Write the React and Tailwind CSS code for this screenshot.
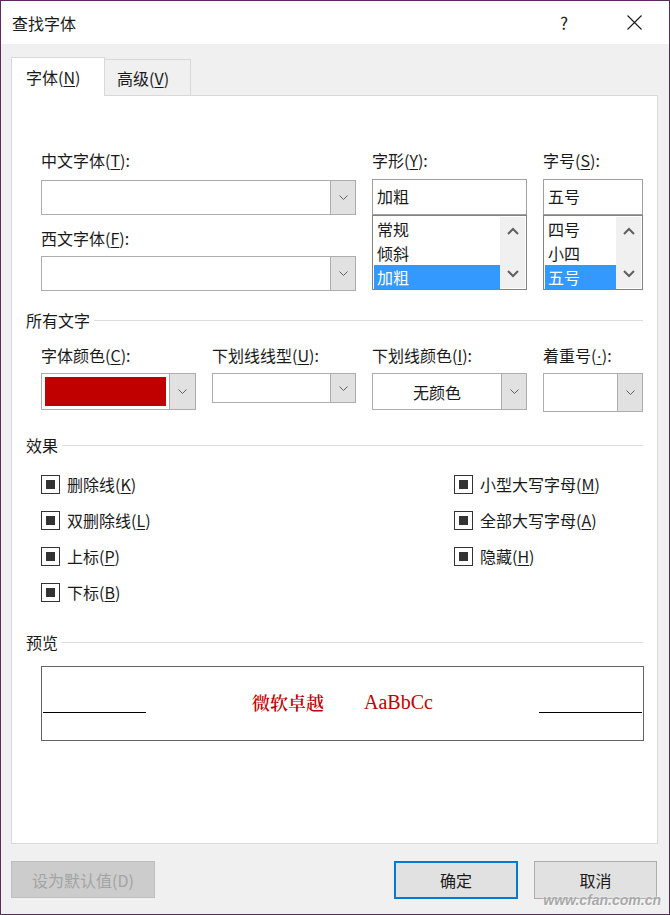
import React from 'react'

const font = "font-['Microsoft_YaHei','Noto_Sans_CJK_SC',sans-serif]"

function Key({ k }) {
  return <span className="underline underline-offset-2 decoration-1">{k}</span>
}

function Label({ text, k, tail = ':' }) {
  return (
    <div className="h-[22px] text-[16px] leading-[22px] text-[#1a1a1a] whitespace-nowrap">
      {text}(<Key k={k} />){tail}
    </div>
  )
}

function Chevron() {
  return (
    <svg width="9" height="5" viewBox="0 0 9 5" fill="none">
      <polyline points="0.5,0.5 4.5,4.5 8.5,0.5" stroke="#5f5f5f" strokeWidth="1" />
    </svg>
  )
}

function ScrollArrow({ up }) {
  return (
    <svg width="12" height="8" viewBox="0 0 12 8" fill="none">
      <polyline
        points={up ? '1,7 6,2 11,7' : '1,1 6,6 11,1'}
        stroke="#606060"
        strokeWidth="2"
      />
    </svg>
  )
}

function Combo({ w, h, children }) {
  return (
    <div className={`flex border border-[#adadad] bg-white ${w} ${h}`}>
      <div className="flex-1 min-w-0">{children}</div>
      <div className="w-[25px] bg-[#e1e1e1] border-l border-[#adadad] flex items-center justify-center">
        <Chevron />
      </div>
    </div>
  )
}

function ListBox({ items, selected, w }) {
  return (
    <div className={`${w} h-[75px] border border-[#828282] bg-white flex p-px`}>
      <div className="flex-1 flex flex-col">
        {items.map((it) => (
          <div
            key={it}
            className={`h-[24px] leading-[24px] pl-[3px] text-[16px] ${
              it === selected ? 'bg-[#3399ff] text-white' : 'text-[#1a1a1a]'
            }`}
          >
            {it}
          </div>
        ))}
      </div>
      <div className="w-[25px] bg-[#f0f0f0] flex flex-col items-center justify-between py-[10px]">
        <ScrollArrow up />
        <ScrollArrow />
      </div>
    </div>
  )
}

function SectionHeader({ title }) {
  return (
    <div className="flex items-center h-[22px] mr-[14px]">
      <span className="text-[16px] leading-[22px] text-[#1a1a1a]">{title}</span>
      <div className="flex-1 h-px bg-[#dcdcdc] ml-[4px]" />
    </div>
  )
}

function Check({ text, k }) {
  return (
    <div className="h-[36px] flex items-center">
      <div className="w-[19px] h-[19px] border border-[#333] flex items-center justify-center bg-white">
        <div className="w-[9px] h-[9px] bg-[#333]" />
      </div>
      <span className="ml-[7px] text-[16px] leading-[22px] text-[#1a1a1a] whitespace-nowrap">
        {text}(<Key k={k} />)
      </span>
    </div>
  )
}

export default function App() {
  return (
    <div className={`relative w-[670px] h-[915px] border border-[#5b2a5e] bg-[#f0f0f0] flex flex-col ${font}`}>
      {/* title bar */}
      <div className="h-[43px] bg-white flex items-center pl-[11px] pr-[27px]">
        <span className="text-[16px] text-[#1a1a1a]">查找字体</span>
        <span className="ml-auto text-[17px] text-[#1a1a1a] mr-[59px]">?</span>
        <svg width="15" height="15" viewBox="0 0 15 15" fill="none">
          <path d="M0.5 0.5 L14.5 14.5 M14.5 0.5 L0.5 14.5" stroke="#1a1a1a" strokeWidth="1.1" />
        </svg>
      </div>

      {/* tabs */}
      <div className="mt-[13px] ml-[10px] flex items-end">
        <div className="relative z-10 -mb-px w-[94px] h-[39px] bg-white border-l border-t border-r border-[#d9d9d9] flex items-center pl-[14px] text-[16px] text-[#1a1a1a]">
          <span>
            字体(<Key k="N" />)
          </span>
        </div>
        <div className="w-[86px] h-[36px] border-t border-r border-[#d9d9d9] flex items-center pl-[12px] text-[16px] text-[#1a1a1a]">
          <span>
            高级(<Key k="V" />)
          </span>
        </div>
      </div>

      {/* panel */}
      <div className="ml-[10px] w-[647px] h-[749px] border border-[#d9d9d9] bg-white pt-[53px] pl-[14px]">
        <div className="ml-[15px] flex items-start">
          <div className="w-[315px]">
            <Label text="中文字体" k="T" />
            <div className="mt-[9px]">
              <Combo w="w-[315px]" h="h-[35px]" />
            </div>
            <div className="mt-[12px]">
              <Label text="西文字体" k="F" />
            </div>
            <div className="mt-[7px]">
              <Combo w="w-[315px]" h="h-[35px]" />
            </div>
          </div>
          <div className="ml-[16px] w-[155px]">
            <Label text="字形" k="Y" />
            <div className="mt-[8px] h-[36px] border border-[#a0a0a0] pl-[4px] text-[16px] leading-[33px] text-[#1a1a1a]">
              加粗
            </div>
            <ListBox w="w-[155px]" items={['常规', '倾斜', '加粗']} selected="加粗" />
          </div>
          <div className="ml-[16px] w-[100px]">
            <Label text="字号" k="S" />
            <div className="mt-[8px] h-[36px] border border-[#a0a0a0] pl-[4px] text-[16px] leading-[33px] text-[#1a1a1a]">
              五号
            </div>
            <ListBox w="w-[100px]" items={['四号', '小四', '五号']} selected="五号" />
          </div>
        </div>

        <div className="mt-[18px]">
          <SectionHeader title="所有文字" />
        </div>

        <div className="ml-[15px] mt-[13px] flex items-start gap-[16px]">
          <div className="w-[155px]">
            <Label text="字体颜色" k="C" />
            <div className="mt-[7px] flex w-[155px] h-[37px] border border-[#adadad] bg-white">
              <div className="flex-1 p-[3px]">
                <div className="w-full h-full bg-[#c00000]" />
              </div>
              <div className="w-[26px] bg-[#e1e1e1] border-l border-[#adadad] flex items-center justify-center">
                <Chevron />
              </div>
            </div>
          </div>
          <div className="w-[144px]">
            <Label text="下划线线型" k="U" />
            <div className="mt-[7px]">
              <Combo w="w-[144px]" h="h-[30px]" />
            </div>
          </div>
          <div className="w-[155px]">
            <Label text="下划线颜色" k="I" />
            <div className="mt-[7px]">
              <Combo w="w-[155px]" h="h-[37px]">
                <div className="h-full flex items-center justify-center text-[16px] text-[#1a1a1a]">无颜色</div>
              </Combo>
            </div>
          </div>
          <div className="w-[100px]">
            <div className="h-[22px] text-[16px] leading-[22px] text-[#1a1a1a] whitespace-nowrap">
              着重号(<span className="underline underline-offset-2 decoration-1 font-['Liberation_Sans',sans-serif]">·</span>):
            </div>
            <div className="mt-[7px]">
              <Combo w="w-[100px]" h="h-[39px]" />
            </div>
          </div>
        </div>

        <div className="mt-[22px]">
          <SectionHeader title="效果" />
        </div>

        <div className="ml-[15px] mt-[10px] flex">
          <div className="w-[413px] flex flex-col">
            <Check text="删除线" k="K" />
            <Check text="双删除线" k="L" />
            <Check text="上标" k="P" />
            <Check text="下标" k="B" />
          </div>
          <div className="flex flex-col">
            <Check text="小型大写字母" k="M" />
            <Check text="全部大写字母" k="A" />
            <Check text="隐藏" k="H" />
          </div>
        </div>

        <div className="mt-[21px]">
          <SectionHeader title="预览" />
        </div>

        <div className="ml-[15px] mt-[13px] w-[603px] h-[75px] border border-[#646464] px-px pt-[20px]">
          <div className="flex items-end h-[24px]">
            <div className="w-[103px] h-px bg-black mb-[-2px]" />
            <div className="flex-1 flex justify-center items-end gap-[40px] text-[#c00000] leading-[24px] -mb-[3px]">
              <span className="font-['Noto_Serif_CJK_SC','Noto_Sans_CJK_SC',serif] text-[18px] font-semibold">微软卓越</span>
              <span className="font-['Liberation_Serif',serif] text-[20px]">AaBbCc</span>
            </div>
            <div className="w-[103px] h-px bg-black mb-[-2px]" />
          </div>
        </div>
      </div>

      {/* buttons */}
      <div className="mt-[17px] ml-[10px] flex items-start">
        <div className="w-[144px] h-[37px] bg-[#cccccc] border border-[#bfbfbf] flex items-center justify-center text-[16px] text-[#a3a3a3]">
          设为默认值(D)
        </div>
        <div className="ml-[239px] w-[124px] h-[38px] bg-[#e1e1e1] border-2 border-[#0078d7] flex items-center justify-center text-[16px] text-[#1a1a1a]">
          确定
        </div>
        <div className="ml-[16px] w-[123px] h-[38px] bg-[#e1e1e1] border border-[#adadad] flex items-center justify-center text-[16px] text-[#1a1a1a]">
          取消
        </div>
      </div>

      <div className="absolute right-[8px] bottom-[6px] font-['Liberation_Sans',sans-serif] italic font-bold text-[14px] leading-[16px] text-[#a8a8a8] [text-shadow:0_0_2px_#fff]">
        www.cfan.com.cn
      </div>
    </div>
  )
}
